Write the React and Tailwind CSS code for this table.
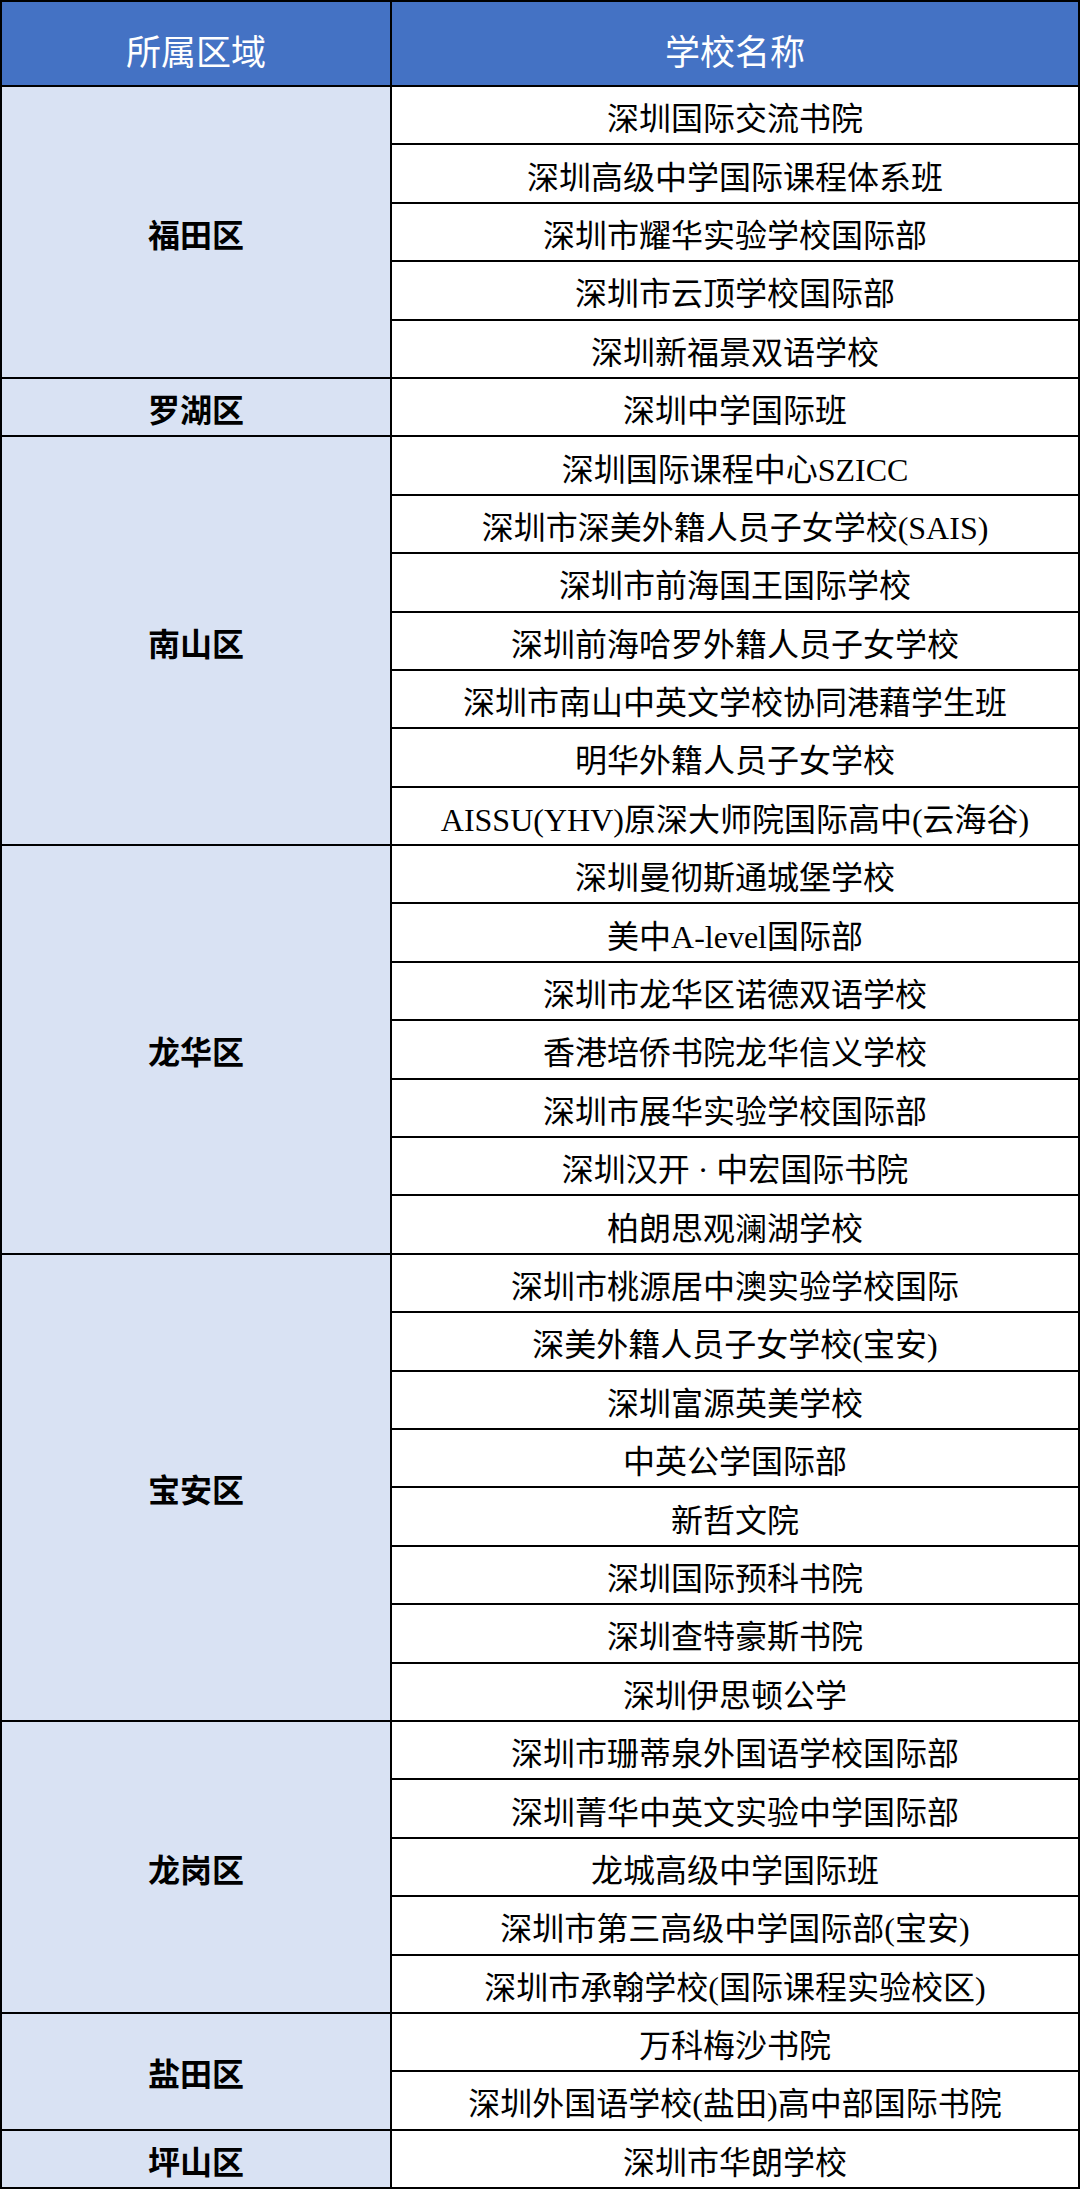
const DATA = [
  {
    area: "福田区",
    schools: [
      "深圳国际交流书院",
      "深圳高级中学国际课程体系班",
      "深圳市耀华实验学校国际部",
      "深圳市云顶学校国际部",
      "深圳新福景双语学校",
    ],
  },
  { area: "罗湖区", schools: ["深圳中学国际班"] },
  {
    area: "南山区",
    schools: [
      "深圳国际课程中心SZICC",
      "深圳市深美外籍人员子女学校(SAIS)",
      "深圳市前海国王国际学校",
      "深圳前海哈罗外籍人员子女学校",
      "深圳市南山中英文学校协同港藉学生班",
      "明华外籍人员子女学校",
      "AISSU(YHV)原深大师院国际高中(云海谷)",
    ],
  },
  {
    area: "龙华区",
    schools: [
      "深圳曼彻斯通城堡学校",
      "美中A-level国际部",
      "深圳市龙华区诺德双语学校",
      "香港培侨书院龙华信义学校",
      "深圳市展华实验学校国际部",
      "深圳汉开 · 中宏国际书院",
      "柏朗思观澜湖学校",
    ],
  },
  {
    area: "宝安区",
    schools: [
      "深圳市桃源居中澳实验学校国际",
      "深美外籍人员子女学校(宝安)",
      "深圳富源英美学校",
      "中英公学国际部",
      "新哲文院",
      "深圳国际预科书院",
      "深圳查特豪斯书院",
      "深圳伊思顿公学",
    ],
  },
  {
    area: "龙岗区",
    schools: [
      "深圳市珊蒂泉外国语学校国际部",
      "深圳菁华中英文实验中学国际部",
      "龙城高级中学国际班",
      "深圳市第三高级中学国际部(宝安)",
      "深圳市承翰学校(国际课程实验校区)",
    ],
  },
  { area: "盐田区", schools: ["万科梅沙书院", "深圳外国语学校(盐田)高中部国际书院"] },
  { area: "坪山区", schools: ["深圳市华朗学校"] },
];

export default function App() {
  return (
    <div className="w-[1080px] bg-white text-black font-['Liberation_Serif','Noto_Sans_CJK_SC',serif]">
      <table className="w-full table-fixed border-collapse border-2 border-black">
        <colgroup>
          <col className="w-[390px]" />
          <col />
        </colgroup>
        <thead>
          <tr className="h-[85px] bg-[#4472c4] text-white text-[35px] font-['Noto_Sans_CJK_SC',sans-serif]">
            <th className="border-2 border-black p-0 pt-3 font-normal leading-none">所属区域</th>
            <th className="border-2 border-black p-0 pt-3 font-normal leading-none">学校名称</th>
          </tr>
        </thead>
        <tbody>
          {DATA.map((g) =>
            g.schools.map((s, i) => (
              <tr key={g.area + s} className="h-[58.4px]">
                {i === 0 && (
                  <td
                    rowSpan={g.schools.length}
                    className="border-2 border-black bg-[#d9e2f3] p-0 pt-2 text-center text-[32px] font-bold leading-none"
                  >
                    {g.area}
                  </td>
                )}
                <td className="border-2 border-black p-0 pt-2 text-center text-[32px] leading-none whitespace-nowrap">
                  {s}
                </td>
              </tr>
            ))
          )}
        </tbody>
      </table>
    </div>
  );
}
